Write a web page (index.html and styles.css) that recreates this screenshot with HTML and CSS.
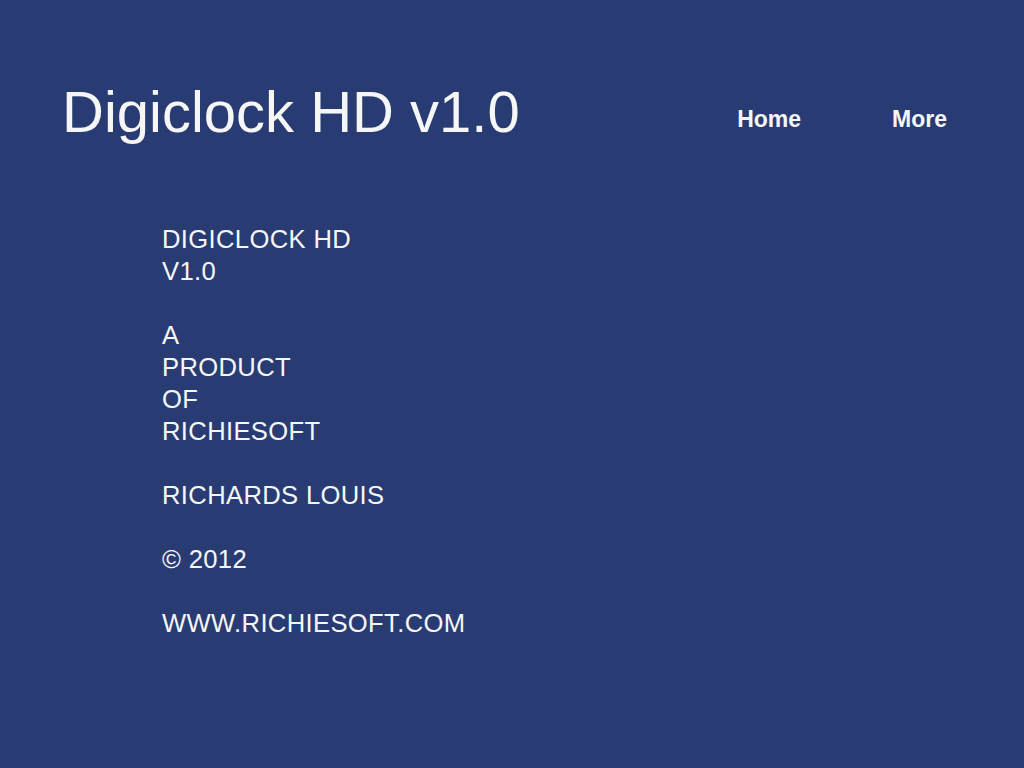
FILE: index.html
```html
<!DOCTYPE html>
<html>
<head>
<meta charset="utf-8">
<title>Digiclock HD v1.0</title>
<link rel="stylesheet" href="styles.css">
</head>
<body>
<div class="page">
  <header class="header">
    <h1 class="title">Digiclock HD v1.0</h1>
    <nav class="nav">
      <a class="nav-link" href="#">Home</a>
      <a class="nav-link" href="#">More</a>
    </nav>
  </header>
  <main class="content">
    <p class="block">DIGICLOCK HD<br>V1.0</p>
    <p class="block">A<br>PRODUCT<br>OF<br>RICHIESOFT</p>
    <p class="block">RICHARDS LOUIS</p>
    <p class="block">© 2012</p>
    <p class="block">WWW.RICHIESOFT.COM</p>
  </main>
</div>
</body>
</html>
```
FILE: styles.css
```css
html, body {
  margin: 0;
  padding: 0;
  background: #283c73;
}
.page {
  width: 1024px;
  height: 768px;
  background: #283c73;
  color: #f6f6f6;
  font-family: "Liberation Sans", Arial, Helvetica, sans-serif;
  border-radius: 4px;
  overflow: hidden;
}
.header {
  display: flex;
  align-items: flex-start;
  padding: 83px 77px 0 62px;
}
.title {
  margin: 0;
  font-size: 58px;
  line-height: 58px;
  font-weight: normal;
}
.nav {
  margin-left: auto;
  margin-top: 25px;
  display: flex;
  gap: 91px;
}
.nav-link {
  color: #f6f6f6;
  text-decoration: none;
  font-weight: bold;
  font-size: 23px;
  line-height: 23px;
}
.content {
  padding: 82px 0 0 162px;
  font-size: 25.6px;
  line-height: 32px;
  letter-spacing: 0.35px;
}
.block {
  margin: 0 0 32px 0;
}
```
